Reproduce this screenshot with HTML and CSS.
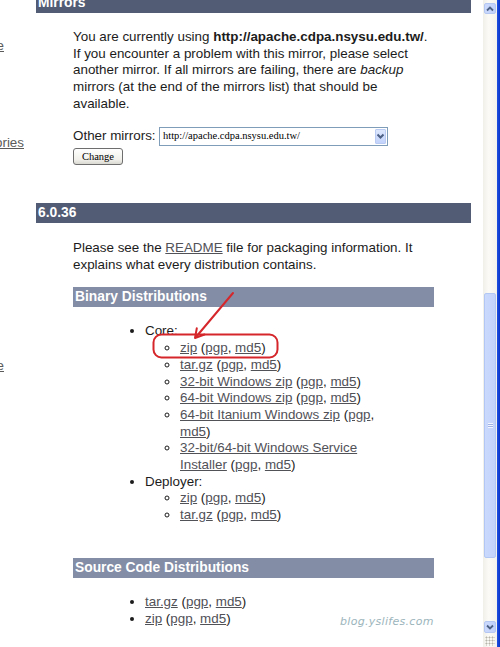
FILE: index.html
```html
<!DOCTYPE html>
<html lang="en">
<head>
<meta charset="utf-8">
<title>Apache Tomcat 6.0.36 download</title>
<link rel="stylesheet" href="styles.css">
</head>
<body>
<div class="window">
  <div class="viewport">
    <div class="page">
      <nav class="nav">
        <a class="nav-link nav-link--first nav-link--e" href="#">e</a>
        <a class="nav-link nav-link--second nav-link--ories" href="#">ories</a>
        <a class="nav-link nav-link--third nav-link--e" href="#">e</a>
      </nav>
      <main class="main">
        <section class="section">
          <h2 class="bar bar--dark">Mirrors</h2>
          <div class="section-body">
            <p class="text text--mirrors">You are currently using <b>http://apache.cdpa.nsysu.edu.tw/</b>. If you encounter a problem with this mirror, please select another mirror. If all mirrors are failing, there are <i>backup</i> mirrors (at the end of the mirrors list) that should be available.</p>
            <form class="mirror-form">
              <div class="mirror-row">
                <span class="mirror-label">Other mirrors:</span>
                <div class="select">
                  <span class="select-value">http://apache.cdpa.nsysu.edu.tw/</span>
                  <span class="select-arrow"><svg width="9" height="7" viewBox="0 0 9 7"><polyline points="1.5,1.5 4.5,4.5 7.5,1.5" fill="none" stroke="#4d6185" stroke-width="2"/></svg></span>
                </div>
              </div>
              <button class="btn" type="button">Change</button>
            </form>
          </div>
        </section>
        <section class="section section--release">
          <h2 class="bar bar--dark">6.0.36</h2>
          <div class="section-body">
            <p class="text text--readme">Please see the <a class="link" href="#">README</a> file for packaging information. It explains what every distribution contains.</p>
            <h3 class="bar bar--light bar--binary">Binary Distributions</h3>
            <ul class="dist-list">
              <li>Core:
                <ul class="sub-list">
                  <li><a class="link" href="#">zip</a> (<a class="link" href="#">pgp</a>, <a class="link" href="#">md5</a>)</li>
                  <li><a class="link" href="#">tar.gz</a> (<a class="link" href="#">pgp</a>, <a class="link" href="#">md5</a>)</li>
                  <li><a class="link" href="#">32-bit Windows zip</a> (<a class="link" href="#">pgp</a>, <a class="link" href="#">md5</a>)</li>
                  <li><a class="link" href="#">64-bit Windows zip</a> (<a class="link" href="#">pgp</a>, <a class="link" href="#">md5</a>)</li>
                  <li><a class="link" href="#">64-bit Itanium Windows zip</a> (<a class="link" href="#">pgp</a>, <a class="link" href="#">md5</a>)</li>
                  <li><a class="link" href="#">32-bit/64-bit Windows Service Installer</a> (<a class="link" href="#">pgp</a>, <a class="link" href="#">md5</a>)</li>
                </ul>
              </li>
              <li>Deployer:
                <ul class="sub-list">
                  <li><a class="link" href="#">zip</a> (<a class="link" href="#">pgp</a>, <a class="link" href="#">md5</a>)</li>
                  <li><a class="link" href="#">tar.gz</a> (<a class="link" href="#">pgp</a>, <a class="link" href="#">md5</a>)</li>
                </ul>
              </li>
            </ul>
            <h3 class="bar bar--light bar--source">Source Code Distributions</h3>
            <ul class="dist-list">
              <li><a class="link" href="#">tar.gz</a> (<a class="link" href="#">pgp</a>, <a class="link" href="#">md5</a>)</li>
              <li><a class="link" href="#">zip</a> (<a class="link" href="#">pgp</a>, <a class="link" href="#">md5</a>)</li>
            </ul>
          </div>
        </section>
      </main>
    </div>
    <svg class="annotation" width="483" height="647" viewBox="0 0 483 647">
      <rect x="153.5" y="334.5" width="124" height="23" rx="8" ry="8" fill="none" stroke="#d5272b" stroke-width="2"/>
      <line x1="233" y1="293" x2="196" y2="337" stroke="#d5272b" stroke-width="2" stroke-linecap="round"/>
      <polyline points="204.5,334.5 195,338 196.8,328.2" fill="none" stroke="#d5272b" stroke-width="2" stroke-linecap="round" stroke-linejoin="round"/>
    </svg>
    <div class="watermark">blog.yslifes.com</div>
  </div>
  <div class="scrollbar">
    <div class="sb-btn sb-btn--up"><svg width="8" height="6" viewBox="0 0 8 6"><polyline points="1,4.5 4,1.5 7,4.5" fill="none" stroke="#4d6185" stroke-width="1.8"/></svg></div>
    <div class="sb-thumb"><span class="sb-grip"></span></div>
    <div class="sb-btn sb-btn--down"><svg width="8" height="6" viewBox="0 0 8 6"><polyline points="1,1.5 4,4.5 7,1.5" fill="none" stroke="#4d6185" stroke-width="1.8"/></svg></div>
    <div class="sb-resize"></div>
  </div>
  <div class="frame"></div>
</div>
</body>
</html>
```
FILE: styles.css
```css
html, body {
  margin: 0;
  padding: 0;
  background: #fff;
}
body {
  font-family: "Liberation Sans", Arial, sans-serif;
  font-size: 13.4px;
  line-height: 16.7px;
  color: #1c1c1c;
  overflow: hidden;
}
.window {
  display: flex;
  width: 500px;
  height: 647px;
  overflow: hidden;
}
.viewport {
  position: relative;
  flex: none;
  width: 483px;
  height: 647px;
  overflow: hidden;
}
.page {
  display: flex;
  align-items: flex-start;
}

/* left navigation (scrolled off) */
.nav {
  flex: none;
  width: 36px;
  overflow: hidden;
  display: flex;
  flex-direction: column;
  align-items: flex-start;
}
.nav-link {
  display: flex;
  justify-content: flex-end;
  white-space: nowrap;
  color: #5b5b5b;
  text-decoration: underline;
}
.nav-link--e { width: 4px; }
.nav-link--ories { width: 24px; }
.nav-link--first { margin-top: 38px; }
.nav-link--second { margin-top: 80px; }
.nav-link--third { margin-top: 207px; }

/* main column */
.main {
  flex: none;
  width: 435px;
  margin-top: -7px;
}
.bar {
  margin: 0;
  height: 20px;
  line-height: 20px;
  padding-left: 2px;
  color: #fff;
  font-size: 13.8px;
  font-weight: bold;
}
.bar--dark { background: #525c75; }
.bar--light { background: #838da6; }
.section-body {
  padding: 0 37px;
}
.text { margin: 0; }
.text--mirrors { margin-top: 16px; }
.text--readme { margin: 17px 0 14px; }

.mirror-form {
  margin: 14.5px 0 0;
}
.mirror-row {
  display: flex;
  align-items: center;
  gap: 3.4px;
  height: 19px;
}
.select {
  box-sizing: border-box;
  width: 229px;
  height: 19px;
  border: 1px solid #7f9db9;
  display: flex;
  align-items: center;
  padding-left: 3px;
  background: #fff;
  font-family: "Liberation Serif", "Times New Roman", serif;
  font-size: 10.5px;
  color: #000;
}
.select-arrow {
  margin-left: auto;
  margin-right: 1px;
  width: 11px;
  height: 15px;
  box-sizing: border-box;
  border: 1px solid #b9cbf3;
  border-radius: 1px;
  background: linear-gradient(#dce6fd, #c3d3fb);
  display: flex;
  align-items: center;
  justify-content: center;
}
.btn {
  display: block;
  margin-top: 2px;
  width: 50px;
  height: 17px;
  padding: 0;
  box-sizing: border-box;
  border: 1px solid #6e6e6e;
  border-radius: 3px;
  background: linear-gradient(#ffffff, #f1f0ea 70%, #d9d8d1);
  font-family: "Liberation Serif", "Times New Roman", serif;
  font-size: 10.5px;
  line-height: 14px;
  color: #000;
}

.section--release { margin-top: 38px; }
.bar--binary { margin-top: 0; }
.bar--source { margin-top: 34px; }

.dist-list {
  margin: 16px 0 0;
  padding: 0 40px 0 72px;
  list-style: disc;
}
.sub-list {
  margin: 0;
  padding-left: 35px;
  list-style: circle;
}
.link {
  color: #515158;
  text-decoration: underline;
}

/* overlays */
.annotation {
  position: absolute;
  left: 0;
  top: 0;
  pointer-events: none;
}
.watermark {
  position: absolute;
  left: 340px;
  top: 614px;
  font-family: "DejaVu Sans", sans-serif;
  font-style: italic;
  font-size: 11px;
  letter-spacing: 0.3px;
  color: #9cb5bc;
}

/* scrollbar */
.scrollbar {
  flex: none;
  width: 14px;
  height: 647px;
  background: linear-gradient(90deg, #f0efe8, #fbfaf6 40%, #f3f2ec);
  display: flex;
  flex-direction: column;
  align-items: center;
}
.sb-btn {
  box-sizing: border-box;
  width: 12px;
  border: 1px solid #b4c6f2;
  border-radius: 2px;
  background: linear-gradient(90deg, #cbd9fc, #bfd0fa);
  display: flex;
  align-items: center;
  justify-content: center;
}
.sb-btn--up {
  margin-top: 3px;
  height: 11px;
}
.sb-thumb {
  box-sizing: border-box;
  margin-top: 279px;
  width: 12px;
  height: 265px;
  border: 1px solid #b3c7f4;
  border-radius: 2px;
  background: linear-gradient(90deg, #cad9fd, #c2d3fb);
  display: flex;
  align-items: center;
  justify-content: center;
}
.sb-grip {
  width: 5px;
  height: 5px;
  background: repeating-linear-gradient(#f3f6fe 0 1px, #9fb3e6 1px 2px);
}
.sb-btn--down {
  margin-top: 63px;
  height: 12px;
}
.sb-resize {
  margin-top: 3px;
  width: 10px;
  height: 10px;
  background: radial-gradient(circle, #b5b3aa 0.8px, transparent 1.2px) 0 0 / 3px 3px;
}
.frame {
  flex: none;
  width: 3px;
  height: 647px;
  background: linear-gradient(90deg, #1d4fe0, #0a35c8);
}
```
